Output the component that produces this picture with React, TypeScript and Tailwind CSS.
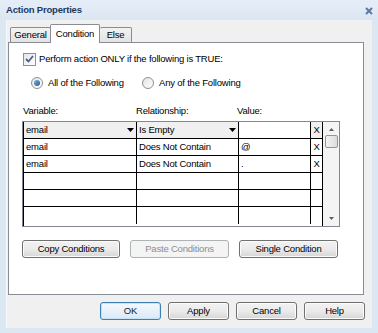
import React from 'react'

const font = { fontFamily: '"Liberation Sans", Arial, sans-serif' }

function Btn({ label, w, kind }: { label: string; w: string; kind?: 'default' | 'disabled' }) {
  const base = `${w} h-[18px] rounded-[3px] border text-[9.5px] tracking-[-0.2px] leading-none flex items-center justify-center`
  if (kind === 'disabled')
    return <div className={`${base} border-[#adb2b5] bg-[#f4f4f4] text-[#8d8d8d]`}>{label}</div>
  if (kind === 'default')
    return (
      <div className={`${base} border-[#3c7fb1] bg-gradient-to-b from-[#f4f9fd] to-[#dbe9f5] text-[#222] shadow-[inset_0_0_0_1px_#c5e3f9]`}>
        {label}
      </div>
    )
  return (
    <div className={`${base} border-[#707070] bg-gradient-to-b from-[#f2f2f2] via-[#ebebeb] to-[#d6d6d6] text-black shadow-[inset_0_0_0_1px_#fcfcfc]`}>
      {label}
    </div>
  )
}

function Arrow() {
  return (
    <svg width="7" height="4" viewBox="0 0 7 4">
      <path d="M0 0h7L3.5 4z" fill="#000" />
    </svg>
  )
}

export default function App() {
  const rows = [
    { v: 'email', r: 'Does Not Contain', val: '@' },
    { v: 'email', r: 'Does Not Contain', val: '.' },
    null,
    null,
    null,
  ]
  return (
    <div className="w-[378px] h-[333px] flex flex-col bg-[#dce7f4] text-black" style={font}>
      {/* title bar */}
      <div className="h-[20px] flex items-center justify-between pl-[6px] pr-[5px] bg-gradient-to-b from-[#e6eef8] to-[#dbe6f3]">
        <span className="text-[9.5px] font-bold text-[#1e395b] tracking-[-0.2px]">Action Properties</span>
        <svg width="8" height="8" viewBox="0 0 8 8" className="mt-[2px]">
          <path d="M1 1l6 6M7 1L1 7" stroke="#5b79a4" strokeWidth="2" />
        </svg>
      </div>

      {/* client area */}
      <div className="mx-[6px] mb-[5px] flex-1 bg-[#f0f0f0] border-l border-[#f7fafd] flex flex-col text-[9.5px] tracking-[-0.2px]">
        {/* tabs */}
        <div className="h-[22px] flex items-end pl-[3px]">
          <div className="w-[41px] h-[15px] border border-b-0 border-[#898c95] rounded-t-[2px] bg-gradient-to-b from-[#f3f3f3] to-[#e3e3e3] flex items-center justify-center">
            General
          </div>
          <div className="relative z-10 w-[50px] h-[19px] -mb-[1px] border border-b-0 border-[#898c95] rounded-t-[2px] bg-white flex items-start justify-center pt-[2px] -ml-[1px]">
            Condition
          </div>
          <div className="w-[32px] h-[15px] border border-b-0 border-l-0 border-[#898c95] rounded-t-[2px] bg-gradient-to-b from-[#f3f3f3] to-[#e3e3e3] flex items-center justify-center">
            Else
          </div>
        </div>

        {/* panel */}
        <div className="ml-[1px] w-[356px] h-[253px] border border-[#898c95] bg-white flex flex-col pl-[14px]">
          <div className="mt-[9px] flex items-center gap-[3px]">
            <div className="w-[13px] h-[13px] border border-[#8e8f8f] bg-gradient-to-br from-[#e6e6e6] to-white flex items-center justify-center">
              <svg width="9" height="8" viewBox="0 0 9 8">
                <path d="M1 4l2.5 2.5L8 1" stroke="#4a5f97" strokeWidth="1.8" fill="none" />
              </svg>
            </div>
            <span>Perform action ONLY if the following is TRUE:</span>
          </div>

          <div className="mt-[10px] flex items-center pl-[8px]">
            <div className="flex items-center gap-[5px] w-[111px]">
              <div className="w-[12px] h-[12px] rounded-full border border-[#8e8f8f] bg-gradient-to-br from-[#e6e6e6] to-white flex items-center justify-center">
                <div className="w-[6px] h-[6px] rounded-full bg-gradient-to-br from-[#7fb4e0] to-[#1d5a92]" />
              </div>
              <span>All of the Following</span>
            </div>
            <div className="flex items-center gap-[5px]">
              <div className="w-[12px] h-[12px] rounded-full border border-[#8e8f8f] bg-gradient-to-br from-[#e3e3e3] to-white" />
              <span>Any of the Following</span>
            </div>
          </div>

          <div className="mt-[13px] flex">
            <span className="w-[113px]">Variable:</span>
            <span className="w-[101px]">Relationship:</span>
            <span>Value:</span>
          </div>

          {/* grid */}
          <div className="mt-[3px] -ml-[1px] w-[318px] h-[106px] border border-[#828790] flex">
            <div className="flex-1 flex flex-col border-l border-black">
              {/* new-condition row */}
              <div className="h-[17px] flex border-b border-black bg-[#f0f0f0]">
                <div className="w-[113px] border-r border-black px-[2px] flex items-center justify-between">
                  <span>email</span>
                  <Arrow />
                </div>
                <div className="w-[102px] border-r border-black px-[2px] flex items-center justify-between">
                  <span>Is Empty</span>
                  <Arrow />
                </div>
                <div className="w-[72px] border-r border-black bg-white" />
                <div className="flex-1 flex items-center justify-center">X</div>
              </div>
              {rows.map((r, i) => (
                <div key={i} className="h-[17px] flex border-b border-black last:border-b-0 bg-white">
                  <div className="w-[113px] border-r border-black px-[2px] flex items-center">{r?.v}</div>
                  <div className="w-[102px] border-r border-black px-[2px] flex items-center">{r?.r}</div>
                  <div className="w-[72px] border-r border-black px-[2px] flex items-center">{r?.val}</div>
                  <div className="flex-1 flex items-center justify-center">{r ? 'X' : ''}</div>
                </div>
              ))}
            </div>
            {/* scrollbar */}
            <div className="w-[17px] border-l border-black bg-[#f4f4f4] flex flex-col items-center">
              <svg width="5" height="3" viewBox="0 0 5 3" className="mt-[6px]">
                <path d="M0 3h5L2.5 0z" fill="#606060" />
              </svg>
              <div className="mt-[4px] w-[13px] h-[13px] rounded-[2px] border border-[#959595] bg-gradient-to-r from-[#f3f3f3] to-[#dcdcdc]" />
              <div className="flex-1" />
              <svg width="5" height="3" viewBox="0 0 5 3" className="mb-[6px]">
                <path d="M0 0h5L2.5 3z" fill="#606060" />
              </svg>
            </div>
          </div>

          <div className="mt-[13px] flex gap-[10px] ml-[-1px]">
            <Btn label="Copy Conditions" w="w-[98px]" />
            <Btn label="Paste Conditions" w="w-[99px]" kind="disabled" />
            <Btn label="Single Condition" w="w-[99px]" />
          </div>
        </div>

        {/* bottom buttons */}
        <div className="mt-[7px] flex justify-end gap-[7px] pr-[7px]">
          <Btn label="OK" w="w-[61px]" kind="default" />
          <Btn label="Apply" w="w-[61px]" />
          <Btn label="Cancel" w="w-[61px]" />
          <Btn label="Help" w="w-[61px]" />
        </div>
      </div>
    </div>
  )
}
